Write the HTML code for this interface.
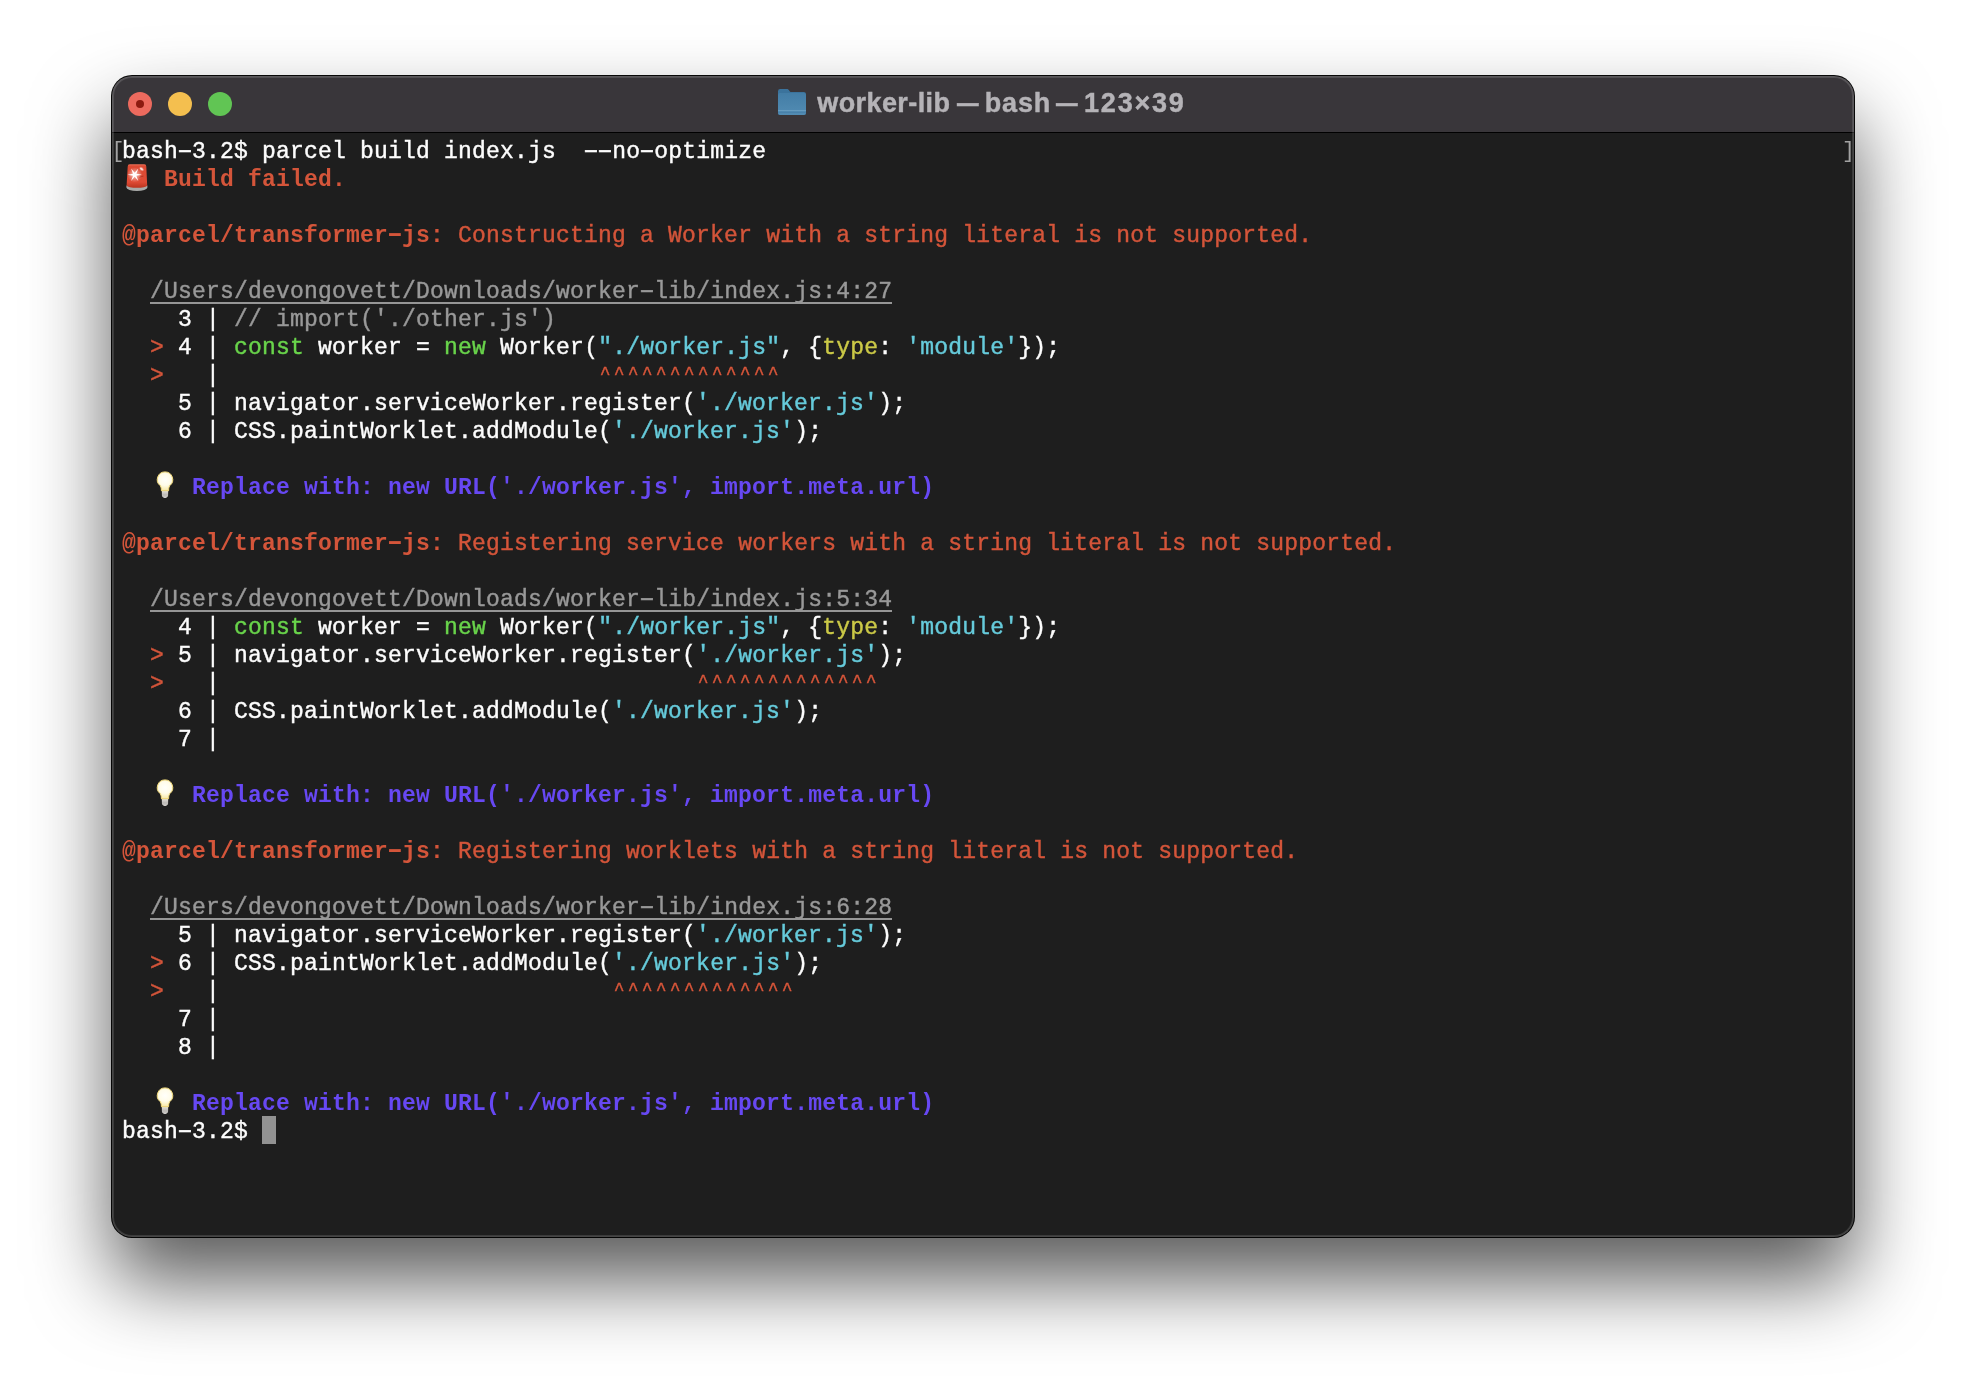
<!DOCTYPE html>
<html lang="en">
<head>
<meta charset="utf-8">
<title>worker-lib — bash — 123×39</title>
<style>
html,body{margin:0;padding:0;}
body{width:1966px;height:1386px;background:#fff;position:relative;overflow:hidden;}
.win{position:absolute;left:112px;top:76px;width:1742px;height:1161px;border-radius:20px;background:#1e1e1e;
 box-shadow:0 0 0 1px rgba(0,0,0,.97), 0 44px 80px rgba(0,0,0,.65);overflow:hidden;}
.win:after{content:"";position:absolute;left:0;top:0;right:0;bottom:0;border-radius:20px;box-shadow:inset 0 0 0 1px rgba(255,255,255,.06),inset 0 0 0 2px rgba(255,255,255,.13);pointer-events:none;}
.tb{position:absolute;left:0;top:0;right:0;height:56px;background:#39363a;border-bottom:1px solid #000;}
.tl{position:absolute;top:16px;width:24px;height:24px;border-radius:50%;}
.t1{left:16px;background:#ec6a5e;}
.t1:after{content:"";position:absolute;left:8px;top:8px;width:8px;height:8px;border-radius:50%;background:#8c1a10;}
.t2{left:56px;background:#f4bf4f;}
.t3{left:96px;background:#61c554;}
.title{position:absolute;left:0;top:11px;height:32px;font:bold 27px/32px "Liberation Sans",sans-serif;color:#b5b3b7;white-space:nowrap;will-change:transform;-webkit-text-stroke:.45px;}
.title span{position:absolute;top:0;}
.title .d{transform:scaleX(.8);transform-origin:0 0;}
.fold{position:absolute;left:666px;top:13px;}
.term{position:absolute;left:0;top:57px;right:0;bottom:0;padding:5px 0 0 10px;font:23px/28px "Liberation Mono",monospace;letter-spacing:.2px;color:#fdfdfd;will-change:transform;-webkit-text-stroke:.4px;}
.ln{height:28px;white-space:pre;}
.r{color:#d4553a;}
.rb{color:#d4553a;font-weight:bold;-webkit-text-stroke:0;}
.g{color:#999;}
.p{color:#999;background:linear-gradient(#969696,#969696) 0 calc(100% - 1px)/100% 2px no-repeat;}
.gr{color:#69d44b;}
.c{color:#66cbdb;}
.y{color:#cbc947;}
.b{color:#6748f3;font-weight:bold;-webkit-text-stroke:0;}
.bk{position:absolute;color:#a2a2a2;top:4px;font-size:21.5px;line-height:28px;-webkit-text-stroke:0;}
.bl{left:-.5px;}
.br{right:-1px;}
.cur{display:inline-block;width:14px;height:28px;background:#929292;vertical-align:top;margin-top:-2px;}
.emo{display:inline-block;width:28px;height:28px;vertical-align:top;position:relative;}
.emo svg{position:absolute;left:0;top:-2px;}
.ca{color:#d9563a;font-size:18px;letter-spacing:3.2px;position:relative;left:1.6px;top:-3.5px;}
.h{display:inline-block;transform:translateY(-1px) scaleX(1.8);}

</style>
</head>
<body>
<div class="win">
<div class="tb">
<i class="tl t1"></i><i class="tl t2"></i><i class="tl t3"></i>
<svg class="fold" width="28" height="26" viewBox="0 0 28 26"><defs><linearGradient id="fg" x1="0" y1="0" x2="0" y2="1"><stop offset="0" stop-color="#437da6"/><stop offset="1" stop-color="#528cb3"/></linearGradient></defs><path d="M0 2.2 a2.2 2.2 0 0 1 2.2-2.2 h6.6 c1 0 1.6.4 2.2 1.2 l.9 1.2 c.4.5.9.7 1.6.7 h12.3 a2.2 2.2 0 0 1 2.2 2.2 v18.5 a2.2 2.2 0 0 1-2.2 2.2 h-23.6 a2.2 2.2 0 0 1-2.2-2.2z" fill="#3b739c"/><path d="M0 6 a2 2 0 0 1 2-2 h24 a2 2 0 0 1 2 2 v17.8 a2.2 2.2 0 0 1-2.2 2.2 h-23.6 a2.2 2.2 0 0 1-2.2-2.2z" fill="url(#fg)"/><rect x="0" y="21" width="28" height="1" fill="#7aaccc" opacity=".55"/><rect x="0" y="23" width="28" height="1" fill="#3f78a4" opacity=".5"/></svg>
<div class="title"><span style="left:705.3px;letter-spacing:.4px">worker-lib </span><span class="d" style="left:844.5px">—</span><span style="left:872.8px;letter-spacing:.8px"> bash </span><span class="d" style="left:943.5px">—</span><span style="left:972px;letter-spacing:1.8px"> 123×39</span></div>
</div>
<div class="term">
<span class="bk bl">[</span><span class="bk br">]</span>
<div class="ln">bash<span class="h">-</span>3.2$ parcel build index.js  <span class="h">-</span><span class="h">-</span>no<span class="h">-</span>optimize</div>
<div class="ln"><span class="emo"><svg width="28" height="28" viewBox="0 0 28 28" style="overflow:visible"><defs><linearGradient id="sr" x1="0" y1="0" x2="0" y2="1"><stop offset="0" stop-color="#ea7058"/><stop offset=".08" stop-color="#dc4a33"/><stop offset=".75" stop-color="#df4b35"/><stop offset="1" stop-color="#b9341f"/></linearGradient><radialGradient id="sg" cx=".5" cy=".5" r=".5"><stop offset="0" stop-color="#fff" stop-opacity=".7"/><stop offset="1" stop-color="#fff" stop-opacity="0"/></radialGradient><filter id="sb" x="-30%" y="-30%" width="160%" height="160%"><feGaussianBlur stdDeviation=".55"/></filter></defs><path d="M4.4 21.5 L4.4 23.6 A10.5 3.4 0 0 0 25.4 23.6 L25.4 21.5 Z" fill="#a9aaa8"/><path d="M5.7 2.4 Q5.7 .3 7.8 .3 H22.2 Q24.3 .3 24.3 2.4 L25.2 21.5 A10.35 2.6 0 0 1 4.6 21.5 Z" fill="url(#sr)"/><circle cx="12.7" cy="10.8" r="7.5" fill="url(#sg)"/><path filter="url(#sb)" d="M19.9 10.8 L14.4 11.8 L16.3 17.0 L12.7 12.8 L9.1 17.0 L11.0 11.8 L5.5 10.8 L11.0 9.8 L9.1 4.6 L12.7 8.8 L16.3 4.6 L14.4 9.8 Z" fill="#fff"/><ellipse filter="url(#sb)" cx="19.6" cy="5" rx="2.1" ry="1.2" transform="rotate(38 19.6 5)" fill="#fff" opacity=".8"/><path d="M17.6 13.4 Q19.6 12 21.4 12.2" stroke="#8c2616" stroke-width="1" fill="none" opacity=".55"/></svg></span> <span class="rb">Build failed.</span></div>
<div class="ln"></div>
<div class="ln"><span class="rb">@parcel/transformer<span class="h">-</span>js:</span><span class="r"> Constructing a Worker with a string literal is not supported.</span></div>
<div class="ln"></div>
<div class="ln">  <span class="p">/Users/devongovett/Downloads/worker<span class="h">-</span>lib/index.js:4:27</span></div>
<div class="ln">    3 | <span class="g">// import('./other.js')</span></div>
<div class="ln">  <span class="r">&gt;</span> 4 | <span class="gr">const</span> worker = <span class="gr">new</span> Worker(<span class="c">"./worker.js"</span>, {<span class="y">type</span>: <span class="c">'module'</span>});</div>
<div class="ln">  <span class="r">&gt;</span>   |                           <span class="ca">^^^^^^^^^^^^^</span></div>
<div class="ln">    5 | navigator.serviceWorker.register(<span class="c">'./worker.js'</span>);</div>
<div class="ln">    6 | CSS.paintWorklet.addModule(<span class="c">'./worker.js'</span>);</div>
<div class="ln"></div>
<div class="ln">  <span class="emo"><svg width="28" height="28" viewBox="0 0 28 28" style="overflow:visible"><defs><radialGradient id="bg" cx="15" cy="7.5" r="13" gradientUnits="userSpaceOnUse"><stop offset="0" stop-color="#fffffb"/><stop offset=".45" stop-color="#fffce9"/><stop offset=".8" stop-color="#f9ebad"/><stop offset="1" stop-color="#f3dc86"/></radialGradient><linearGradient id="bb" x1="0" y1="0" x2="0" y2="1"><stop offset="0" stop-color="#e2dfda"/><stop offset=".55" stop-color="#bcb9b5"/><stop offset="1" stop-color="#cfcdca"/></linearGradient></defs><path d="M11.8 18.8 H18.2 L18.1 23.4 Q18 25 16.6 25.6 L16 26.1 H14 L13.4 25.6 Q12 25 11.9 23.4 Z" fill="url(#bb)"/><path d="M15 -.1 A7.7 7.7 0 0 1 19.83 13.6 C19.2 14.5 18.8 15.5 18.7 16.8 L18.6 18.7 H11.4 L11.3 16.8 C11.2 15.5 10.8 14.5 10.17 13.6 A7.7 7.7 0 0 1 15 -.1 Z" fill="url(#bg)" stroke="#f4dc7c" stroke-width="1"/></svg></span> <span class="b">Replace with: new URL('./worker.js', import.meta.url)</span></div>
<div class="ln"></div>
<div class="ln"><span class="rb">@parcel/transformer<span class="h">-</span>js:</span><span class="r"> Registering service workers with a string literal is not supported.</span></div>
<div class="ln"></div>
<div class="ln">  <span class="p">/Users/devongovett/Downloads/worker<span class="h">-</span>lib/index.js:5:34</span></div>
<div class="ln">    4 | <span class="gr">const</span> worker = <span class="gr">new</span> Worker(<span class="c">"./worker.js"</span>, {<span class="y">type</span>: <span class="c">'module'</span>});</div>
<div class="ln">  <span class="r">&gt;</span> 5 | navigator.serviceWorker.register(<span class="c">'./worker.js'</span>);</div>
<div class="ln">  <span class="r">&gt;</span>   |                                  <span class="ca">^^^^^^^^^^^^^</span></div>
<div class="ln">    6 | CSS.paintWorklet.addModule(<span class="c">'./worker.js'</span>);</div>
<div class="ln">    7 |</div>
<div class="ln"></div>
<div class="ln">  <span class="emo"><svg width="28" height="28" viewBox="0 0 28 28" style="overflow:visible"><defs><radialGradient id="bg" cx="15" cy="7.5" r="13" gradientUnits="userSpaceOnUse"><stop offset="0" stop-color="#fffffb"/><stop offset=".45" stop-color="#fffce9"/><stop offset=".8" stop-color="#f9ebad"/><stop offset="1" stop-color="#f3dc86"/></radialGradient><linearGradient id="bb" x1="0" y1="0" x2="0" y2="1"><stop offset="0" stop-color="#e2dfda"/><stop offset=".55" stop-color="#bcb9b5"/><stop offset="1" stop-color="#cfcdca"/></linearGradient></defs><path d="M11.8 18.8 H18.2 L18.1 23.4 Q18 25 16.6 25.6 L16 26.1 H14 L13.4 25.6 Q12 25 11.9 23.4 Z" fill="url(#bb)"/><path d="M15 -.1 A7.7 7.7 0 0 1 19.83 13.6 C19.2 14.5 18.8 15.5 18.7 16.8 L18.6 18.7 H11.4 L11.3 16.8 C11.2 15.5 10.8 14.5 10.17 13.6 A7.7 7.7 0 0 1 15 -.1 Z" fill="url(#bg)" stroke="#f4dc7c" stroke-width="1"/></svg></span> <span class="b">Replace with: new URL('./worker.js', import.meta.url)</span></div>
<div class="ln"></div>
<div class="ln"><span class="rb">@parcel/transformer<span class="h">-</span>js:</span><span class="r"> Registering worklets with a string literal is not supported.</span></div>
<div class="ln"></div>
<div class="ln">  <span class="p">/Users/devongovett/Downloads/worker<span class="h">-</span>lib/index.js:6:28</span></div>
<div class="ln">    5 | navigator.serviceWorker.register(<span class="c">'./worker.js'</span>);</div>
<div class="ln">  <span class="r">&gt;</span> 6 | CSS.paintWorklet.addModule(<span class="c">'./worker.js'</span>);</div>
<div class="ln">  <span class="r">&gt;</span>   |                            <span class="ca">^^^^^^^^^^^^^</span></div>
<div class="ln">    7 |</div>
<div class="ln">    8 |</div>
<div class="ln"></div>
<div class="ln">  <span class="emo"><svg width="28" height="28" viewBox="0 0 28 28" style="overflow:visible"><defs><radialGradient id="bg" cx="15" cy="7.5" r="13" gradientUnits="userSpaceOnUse"><stop offset="0" stop-color="#fffffb"/><stop offset=".45" stop-color="#fffce9"/><stop offset=".8" stop-color="#f9ebad"/><stop offset="1" stop-color="#f3dc86"/></radialGradient><linearGradient id="bb" x1="0" y1="0" x2="0" y2="1"><stop offset="0" stop-color="#e2dfda"/><stop offset=".55" stop-color="#bcb9b5"/><stop offset="1" stop-color="#cfcdca"/></linearGradient></defs><path d="M11.8 18.8 H18.2 L18.1 23.4 Q18 25 16.6 25.6 L16 26.1 H14 L13.4 25.6 Q12 25 11.9 23.4 Z" fill="url(#bb)"/><path d="M15 -.1 A7.7 7.7 0 0 1 19.83 13.6 C19.2 14.5 18.8 15.5 18.7 16.8 L18.6 18.7 H11.4 L11.3 16.8 C11.2 15.5 10.8 14.5 10.17 13.6 A7.7 7.7 0 0 1 15 -.1 Z" fill="url(#bg)" stroke="#f4dc7c" stroke-width="1"/></svg></span> <span class="b">Replace with: new URL('./worker.js', import.meta.url)</span></div>
<div class="ln">bash<span class="h">-</span>3.2$ <span class="cur"></span></div>
</div>
</div>
</body>
</html>
